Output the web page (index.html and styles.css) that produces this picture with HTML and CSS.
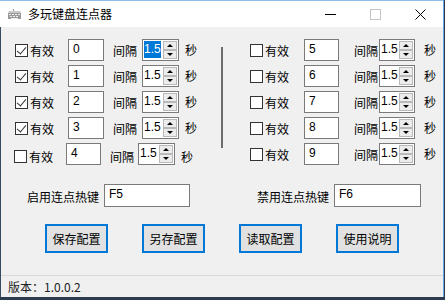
FILE: index.html
```html
<!DOCTYPE html>
<html lang="zh-CN">
<head>
<meta charset="utf-8">
<title>多玩键盘连点器</title>
<link rel="stylesheet" href="styles.css">
</head>
<body>
<div class="window">
  <div class="titlebar">
    <svg class="appicon" width="15" height="11" viewBox="0 0 15 11">
      <path d="M1 4 L14 4 L14 10 L1 10 Z" fill="#9a9a9a"/>
      <path d="M2 2 L13 2 L14 4 L1 4 Z" fill="#c8c8c8"/>
      <rect x="2" y="5" width="2" height="1" fill="#eee"/><rect x="5" y="5" width="2" height="1" fill="#eee"/><rect x="8" y="5" width="2" height="1" fill="#eee"/><rect x="11" y="5" width="2" height="1" fill="#eee"/>
      <rect x="3" y="7" width="2" height="1" fill="#eee"/><rect x="6" y="7" width="2" height="1" fill="#eee"/><rect x="9" y="7" width="2" height="1" fill="#eee"/>
      <rect x="4" y="9" width="7" height="1" fill="#eee"/>
      <path d="M6 0 L7 2" stroke="#888" stroke-width="1"/>
    </svg>
    <span class="title">多玩键盘连点器</span>
    <div class="controls">
      <span class="ctl"><svg width="11" height="11" viewBox="0 0 11 11"><line x1="0" y1="5.5" x2="11" y2="5.5" stroke="#000" stroke-width="1"/></svg></span>
      <span class="ctl"><svg width="11" height="11" viewBox="0 0 11 11"><rect x="0.5" y="0.5" width="10" height="10" fill="none" stroke="#c4c4c4" stroke-width="1"/></svg></span>
      <span class="ctl"><svg width="11" height="11" viewBox="0 0 11 11"><path d="M0.5 0.5 L10.5 10.5 M10.5 0.5 L0.5 10.5" stroke="#000" stroke-width="1"/></svg></span>
    </div>
  </div>

  <div class="body">
    <div class="panel">
      <div class="col col-left">
        <div class="row">
          <span class="cb on"></span><span class="lbl">有效</span>
          <span class="tb key">0</span><span class="lbl2">间隔</span>
          <div class="spin"><span class="val"><span class="sel">1.5</span></span><span class="btns"><span class="up"></span><span class="dn"></span></span></div>
          <span class="lbl3">秒</span>
        </div>
        <div class="row">
          <span class="cb on"></span><span class="lbl">有效</span>
          <span class="tb key">1</span><span class="lbl2">间隔</span>
          <div class="spin"><span class="val">1.5</span><span class="btns"><span class="up"></span><span class="dn"></span></span></div>
          <span class="lbl3">秒</span>
        </div>
        <div class="row">
          <span class="cb on"></span><span class="lbl">有效</span>
          <span class="tb key">2</span><span class="lbl2">间隔</span>
          <div class="spin"><span class="val">1.5</span><span class="btns"><span class="up"></span><span class="dn"></span></span></div>
          <span class="lbl3">秒</span>
        </div>
        <div class="row">
          <span class="cb on"></span><span class="lbl">有效</span>
          <span class="tb key">3</span><span class="lbl2">间隔</span>
          <div class="spin"><span class="val">1.5</span><span class="btns"><span class="up"></span><span class="dn"></span></span></div>
          <span class="lbl3">秒</span>
        </div>
        <div class="row row-off">
          <span class="cb"></span><span class="lbl">有效</span>
          <span class="tb key">4</span><span class="lbl2">间隔</span>
          <div class="spin"><span class="val">1.5</span><span class="btns"><span class="up"></span><span class="dn"></span></span></div>
          <span class="lbl3">秒</span>
        </div>
      </div>
      <div class="divider"></div>
      <div class="col col-right">
        <div class="row">
          <span class="cb"></span><span class="lbl">有效</span>
          <span class="tb key">5</span><span class="lbl2">间隔</span>
          <div class="spin"><span class="val">1.5</span><span class="btns"><span class="up"></span><span class="dn"></span></span></div>
          <span class="lbl3">秒</span>
        </div>
        <div class="row">
          <span class="cb"></span><span class="lbl">有效</span>
          <span class="tb key">6</span><span class="lbl2">间隔</span>
          <div class="spin"><span class="val">1.5</span><span class="btns"><span class="up"></span><span class="dn"></span></span></div>
          <span class="lbl3">秒</span>
        </div>
        <div class="row">
          <span class="cb"></span><span class="lbl">有效</span>
          <span class="tb key">7</span><span class="lbl2">间隔</span>
          <div class="spin"><span class="val">1.5</span><span class="btns"><span class="up"></span><span class="dn"></span></span></div>
          <span class="lbl3">秒</span>
        </div>
        <div class="row">
          <span class="cb"></span><span class="lbl">有效</span>
          <span class="tb key">8</span><span class="lbl2">间隔</span>
          <div class="spin"><span class="val">1.5</span><span class="btns"><span class="up"></span><span class="dn"></span></span></div>
          <span class="lbl3">秒</span>
        </div>
        <div class="row">
          <span class="cb"></span><span class="lbl">有效</span>
          <span class="tb key">9</span><span class="lbl2">间隔</span>
          <div class="spin"><span class="val">1.5</span><span class="btns"><span class="up"></span><span class="dn"></span></span></div>
          <span class="lbl3">秒</span>
        </div>
      </div>
    </div>

    <div class="hotkeys">
      <span class="hk-lbl">启用连点热键</span><span class="tb hk">F5</span>
      <span class="hk-lbl hk-lbl2">禁用连点热键</span><span class="tb hk hk2">F6</span>
    </div>

    <div class="buttons">
      <span class="btn">保存配置</span>
      <span class="btn">另存配置</span>
      <span class="btn">读取配置</span>
      <span class="btn">使用说明</span>
    </div>

    <div class="status">版本：1.0.0.2</div>
  </div>
</div>
</body>
</html>
```

FILE: styles.css
```css
* { box-sizing: border-box; }
html, body { margin: 0; padding: 0; }
body {
  width: 445px;
  height: 300px;
  background: #2d3b52;
  overflow: hidden;
  font-family: "Noto Sans CJK SC", "Microsoft YaHei", sans-serif;
  font-size: 12px;
  color: #000;
}
.window {
  width: 444px;
  height: 297px;
  background: #f0f0f0;
  border-right: 1px solid #6aa6dc;
  display: flex;
  flex-direction: column;
}
.titlebar {
  height: 27px;
  background: #fff;
  display: flex;
  align-items: center;
  border-top: 1px solid #8cbde8;
}
.appicon { margin-left: 7px; margin-top: 1px; }
.title { margin-left: 6px; font-size: 12px; line-height: 14px; }
.controls { margin-left: auto; display: flex; }
.ctl { width: 45px; height: 26px; display: flex; align-items: center; justify-content: center; }
.body {
  flex: 1;
  display: flex;
  flex-direction: column;
  border-left: 1px solid #3a4a62;
}
.panel {
  display: flex;
  padding-top: 12px;
}
.col { display: flex; flex-direction: column; gap: 4px; }
.col-left { width: 220px; padding-left: 14px; }
.col-right { padding-left: 27px; }
.divider {
  width: 2px;
  height: 101px;
  margin-top: 8px;
  background: #6d6d6d;
}
.row { display: flex; align-items: center; height: 22px; }
.cb {
  width: 13px;
  height: 13px;
  border: 1px solid #333;
  background: #fff;
  position: relative;
  flex: none;
}
.cb.on::after {
  content: "";
  position: absolute;
  left: 3px;
  top: 0px;
  width: 4px;
  height: 8px;
  border-right: 1px solid #333;
  border-bottom: 1px solid #333;
  transform: rotate(40deg);
}
.lbl { margin-left: 2px; width: 24px; line-height: 14px; margin-top: 1px; }
.tb {
  background: #fff;
  border: 1px solid #7a7a7a;
  font-family: "Liberation Sans", Arial, sans-serif;
  font-size: 12px;
  line-height: 14px;
  padding: 2px 4px;
}
.key { width: 36px; height: 22px; margin-left: 14px; }
.col-right .key { width: 35px; margin-left: 15px; }
.lbl2 { margin-left: 9px; width: 24px; line-height: 14px; margin-top: 2px; }
.col-right .lbl2 { margin-left: 15px; }
.spin {
  width: 37px;
  height: 22px;
  margin-left: 5px;
  border: 1px solid #7a7a7a;
  background: #fff;
  display: flex;
  font-family: "Liberation Sans", Arial, sans-serif;
  font-size: 12px;
}
.col-right .spin { margin-left: 1px; width: 36px; }
.val { flex: 1; padding: 2px 0 0 1px; line-height: 14px; }
.sel { display: inline-block; background: #0078d7; color: #fff; padding: 1px 0; line-height: 15px; margin-top: -1px; }
.btns { width: 14px; display: flex; flex-direction: column; margin: 1px 1px 1px 0; gap: 0; }
.up, .dn {
  flex: 1;
  border: 1px solid #b9b9b9;
  background: #ececec;
  display: flex;
  align-items: center;
  justify-content: center;
}
.up::after {
  content: "";
  border-left: 3px solid transparent;
  border-right: 3px solid transparent;
  border-bottom: 3px solid #000;
}
.dn::after {
  content: "";
  border-left: 3px solid transparent;
  border-right: 3px solid transparent;
  border-top: 3px solid #000;
}
.lbl3 { margin-left: 6px; line-height: 14px; }
.col-right .lbl3 { margin-left: 9px; }
.row-off .cb { margin-left: -1px; margin-top: 5px; }
.row-off .lbl { margin-top: 6px; }
.row-off .key { margin-left: 13px; width: 35px; }
.row-off .lbl2 { margin-left: 9px; margin-top: 5px; }
.row-off .spin { margin-left: 4px; width: 37px; }
.row-off .lbl3 { margin-top: 5px; }

.hotkeys {
  display: flex;
  align-items: center;
  margin-top: 19px;
  padding-left: 26px;
  height: 23px;
}
.hk-lbl { width: 72px; line-height: 14px; margin-top: 2px; }
.hk { width: 86px; height: 23px; margin-left: 5px; }
.hk-lbl2 { margin-left: 67px; }
.hk2 { width: 87px; margin-left: 5px; }

.buttons {
  display: flex;
  gap: 34px;
  padding-left: 44px;
  margin-top: 17px;
}
.btn {
  width: 63px;
  height: 29px;
  border: 2px solid #0078d7;
  background: #e1e1e1;
  display: flex;
  align-items: center;
  justify-content: center;
  line-height: 14px;
}
.status {
  margin-top: 22px;
  border-top: 1px solid #d9d9d9;
  flex: 1;
  padding-left: 7px;
  padding-top: 4px;
  line-height: 14px;
  color: #222;
}
```
